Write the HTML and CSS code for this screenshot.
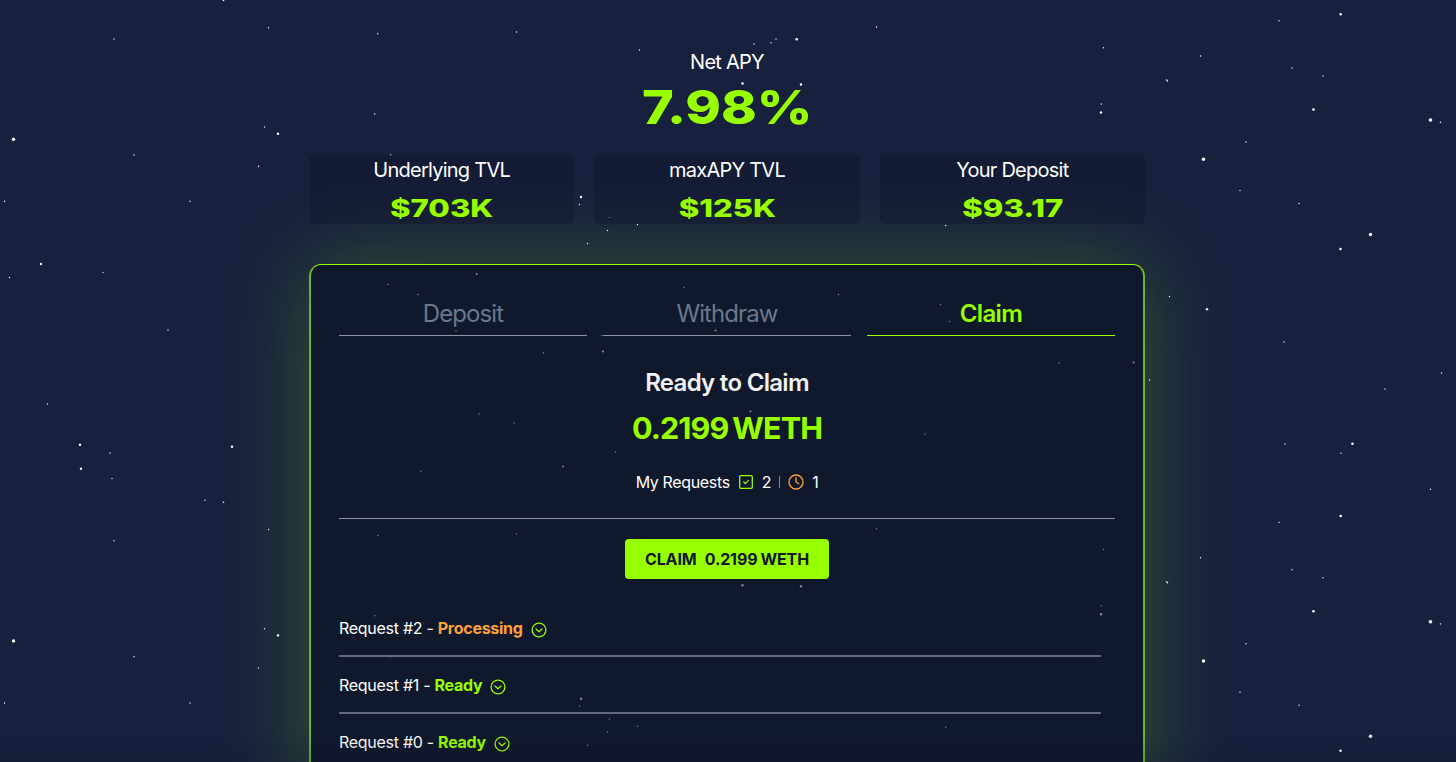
FILE: index.html
```html
<!DOCTYPE html>
<html lang="en">
<head>
    <meta charset="UTF-8">
    <meta name="viewport" content="width=device-width, initial-scale=1.0">
    <title>maxAPY - Claim</title>
    <link rel="stylesheet" href="styles.css">
</head>
<body>
    <svg class="stars" aria-hidden="true">
        <defs>
            <g id="sky"></g>
        </defs>
        <use href="#sky"></use>
        <use href="#sky" y="501.7"></use>
    </svg>

    <main class="page">
        <header class="apy">
            <p class="label">Net APY</p>
            <p class="display big"><span>7.98%</span></p>
        </header>

        <section class="stats">
            <div class="stat">
                <p class="label">Underlying TVL</p>
                <p class="display"><span>$703K</span></p>
            </div>
            <div class="stat">
                <p class="label">maxAPY TVL</p>
                <p class="display"><span>$125K</span></p>
            </div>
            <div class="stat">
                <p class="label">Your Deposit</p>
                <p class="display"><span>$93.17</span></p>
            </div>
        </section>

        <section class="panel">
            <nav class="tabs">
                <a class="tab">Deposit</a>
                <a class="tab">Withdraw</a>
                <a class="tab active">Claim</a>
            </nav>

            <div class="summary">
                <h2>Ready to Claim</h2>
                <p class="amount"><span>0.2199</span><span>WETH</span></p>
                <div class="counts">
                    <span>My Requests</span>
                    <svg class="icon-check" width="16" height="16" viewBox="0 0 16 16">
                        <rect x="1.7" y="1.7" width="12.6" height="12.6" rx="1"/>
                        <path d="M5.8 8l1.6 1.6 2.9-3"/>
                    </svg>
                    <span>2</span>
                    <i class="bar"></i>
                    <svg class="icon-clock" width="16" height="16" viewBox="0 0 16 16">
                        <circle cx="8" cy="8" r="7"/>
                        <path d="M8 3.6V8l2.9 1.7"/>
                    </svg>
                    <span>1</span>
                </div>
            </div>

            <div class="action">
                <button class="claim"><span>CLAIM</span><span>0.2199</span><span>WETH</span></button>
            </div>

            <ul class="requests">
                <li>
                    <span>Request #2 - <b class="processing">Processing</b></span>
                    <svg class="icon-down" width="16" height="16" viewBox="0 0 16 16"><circle cx="8" cy="8" r="6.9"/><path d="M5 7l3 2.7L11 7"/></svg>
                </li>
                <li>
                    <span>Request #1 - <b class="ready">Ready</b></span>
                    <svg class="icon-down" width="16" height="16" viewBox="0 0 16 16"><circle cx="8" cy="8" r="6.9"/><path d="M5 7l3 2.7L11 7"/></svg>
                </li>
                <li>
                    <span>Request #0 - <b class="ready">Ready</b></span>
                    <svg class="icon-down" width="16" height="16" viewBox="0 0 16 16"><circle cx="8" cy="8" r="6.9"/><path d="M5 7l3 2.7L11 7"/></svg>
                </li>
            </ul>
        </section>
    </main>
    <div class="fade"></div>
    <script src="stars.js"></script>
</body>
</html>
```
FILE: styles.css
```css
* {
    box-sizing: border-box;
}
body {
    margin: 0;
    height: 762px;
    overflow: hidden;
    background-color: #17213d;
    color: #fff;
    font-family: Inter, "Open Sans", sans-serif;
}
p, h2, ul {
    margin: 0;
    padding: 0;
}
.stars {
    position: absolute;
    top: 0;
    left: 0;
    width: 100%;
    height: 100%;
    fill: #fff;
}
.page {
    position: relative;
    width: 836px;
    margin-left: 309px;
    padding-top: 50px;
}
.apy {
    height: 105px;
    text-align: center;
}
.label {
    font-size: 20px;
    line-height: 24px;
    letter-spacing: -0.75px;
}
.display {
    margin-top: 13px;
    color: #97ff00;
    font-size: 24.5px;
    font-weight: 800;
    line-height: 24px;
}
.display span {
    display: inline-block;
    transform: scaleX(1.27);
}
.display.big {
    margin-top: 9px;
    font-size: 47px;
    line-height: 48px;
}
.display.big span {
    transform: scaleX(1.15);
}
.stats {
    display: grid;
    grid-template-columns: repeat(3, 1fr);
    gap: 20px;
}
.stat {
    height: 69px;
    padding-top: 3px;
    border-radius: 5px;
    background-color: rgba(18, 23, 45, 0.5);
    text-align: center;
}
.stat .display {
    margin-top: 14px;
}
.panel {
    height: 560px;
    margin-top: 40px;
    padding: 0 28px;
    border: 2px solid #6bb822;
    border-top: 1px solid #97ff00;
    border-radius: 12px;
    background-color: rgba(9, 15, 25, 0.5);
    box-shadow: 0 0 90px rgba(151, 255, 0, 0.24);
}
.tabs {
    display: grid;
    grid-template-columns: repeat(3, 1fr);
    gap: 16px;
    padding-top: 27px;
}
.tab {
    height: 44px;
    border-bottom: 1px solid #8e95a4;
    color: #68788f;
    font-size: 24px;
    line-height: 44px;
    letter-spacing: -0.9px;
    text-align: center;
}
.tab.active {
    border-color: #97ff00;
    color: #97ff00;
    font-weight: 600;
    letter-spacing: -0.6px;
}
.summary {
    height: 183px;
    padding-top: 31px;
    border-bottom: 1px solid #8e95a4;
}
h2 {
    color: #f1f1f1;
    font-size: 24px;
    font-weight: 600;
    line-height: 32px;
    letter-spacing: -0.7px;
    text-align: center;
}
.amount {
    display: flex;
    justify-content: center;
    gap: 4px;
    margin-top: 11px;
    color: #97ff00;
    font-size: 30.5px;
    font-weight: 700;
    line-height: 36px;
    letter-spacing: -0.9px;
}
.counts {
    display: flex;
    justify-content: center;
    align-items: center;
    gap: 8px;
    margin-top: 26px;
    font-size: 16px;
    line-height: 20px;
    letter-spacing: -0.35px;
}
.bar {
    width: 1px;
    height: 12px;
    background-color: #808796;
}
svg {
    flex: none;
    fill: none;
    stroke-width: 1.3;
    stroke-linecap: round;
    stroke-linejoin: round;
}
.icon-check, .icon-down {
    stroke: #97ff00;
}
.icon-clock {
    stroke: #ffa23a;
}
.action {
    display: flex;
    justify-content: center;
    padding-top: 20px;
}
.claim {
    display: flex;
    justify-content: center;
    align-items: center;
    width: 204px;
    height: 40px;
    padding: 0;
    border: none;
    border-radius: 4px;
    background-color: #97ff00;
    color: #10182b;
    font-family: inherit;
    font-size: 16px;
    font-weight: 700;
    letter-spacing: -0.1px;
}
.claim span + span {
    margin-left: 8px;
}
.claim span:last-child {
    margin-left: 3px;
}
.requests {
    width: 762px;
    padding-top: 21px;
    list-style: none;
}
.requests li {
    display: flex;
    align-items: center;
    gap: 8px;
    height: 57px;
    border-bottom: 2px solid #62697b;
    font-size: 16px;
    letter-spacing: -0.28px;
}
.requests svg {
    margin-top: 4px;
}
.processing {
    color: #ffa23a;
}
.ready {
    color: #97ff00;
}
.fade {
    position: absolute;
    right: 0;
    bottom: 0;
    left: 0;
    height: 30px;
    background: linear-gradient(transparent, rgba(10, 14, 35, 0.15));
}
```
FILE: stars.js
```js
// x, y, radius
const stars = [
    [223.5, 0.5, 0.8], [268.5, 27.8, 0.7], [114, 39, 0.7], [377.8, 33.8, 0.7],
    [374.8, 114, 0.7], [264.5, 127, 0.7], [278, 133.7, 1.2], [13.5, 139.2, 1.7],
    [134, 155, 0.7], [258.5, 166.2, 0.7], [390.7, 155, 0.7], [4.5, 201.3, 0.7],
    [190, 201.3, 0.7], [41, 264, 1.2], [9.5, 277.5, 0.7], [103, 272.6, 0.7],
    [168, 330, 0.7], [388, 284.5, 0.7], [418, 294.5, 0.7], [476.7, 274, 1],
    [456, 331, 0.7], [516.5, 32, 0.7], [639.5, 50, 0.7], [754, 44, 0.7],
    [771, 42.7, 0.7], [776, 39, 0.7], [796.7, 39.3, 1.3], [742.5, 83.5, 1.2],
    [801, 84.5, 1.2], [876.5, 27, 0.7], [581, 197, 1.2], [579.5, 204.5, 0.7],
    [609.5, 217.5, 0.6], [637.5, 224.5, 0.7], [607.5, 230.5, 0.7], [587.5, 243.5, 0.7],
    [945.7, 225.5, 0.7], [684, 287.5, 0.7], [838.5, 294.5, 0.7], [940.5, 304.5, 0.7],
    [949.5, 321.5, 0.7], [715.5, 330.5, 1.1], [601.5, 335.5, 0.6], [603, 351.5, 1.1],
    [543.5, 352.7, 0.7], [1103.5, 47.7, 0.7], [1279, 20.7, 0.7], [1340.7, 14.3, 1.3],
    [1200.5, 56, 0.7], [1166.6, 80, 0.7], [1167.4, 81, 0.7], [1292, 68, 0.7],
    [1323, 76, 0.7], [1101.3, 104, 0.7], [1101, 112.5, 1.2], [1313.5, 109.5, 1.3],
    [1430.5, 120, 1.8], [1440.5, 122.2, 0.7], [1246, 142, 0.7], [1203.5, 159.3, 1.7],
    [1240, 190.5, 0.7], [1299, 203.5, 0.7], [1370.5, 234.5, 1.7], [1340.5, 249, 1.3],
    [1169.5, 296.5, 0.7], [1207, 309.3, 1.2], [1284, 342, 0.7], [1133.7, 362.5, 1.1],
    [1059, 363, 0.7], [1149.5, 380, 0.7], [1441.5, 373, 0.7], [47.5, 404, 0.7],
    [80, 444.7, 1.2], [110, 453, 0.7], [81, 468.7, 1.2], [112, 478.5, 0.7],
    [232, 446.7, 1.2], [205, 500.3, 0.7], [479, 414, 0.7], [421, 471.3, 0.7],
    [1385, 389, 0.7], [1285, 444, 0.7], [1352.5, 443.7, 1.3], [1341, 453.3, 0.7],
    [1430.5, 489.3, 0.7], [514, 423, 0.7], [563, 466.5, 1], [750.5, 411.5, 1.1],
    [615.5, 452, 0.7], [733, 419, 0.6], [741, 375, 0.6], [925, 434, 0.7]
];

const sky = document.getElementById("sky");
stars.forEach(([x, y, r]) => {
    const star = document.createElementNS("http://www.w3.org/2000/svg", "circle");
    star.setAttribute("cx", x);
    star.setAttribute("cy", y);
    star.setAttribute("r", r);
    star.setAttribute("fill", "#fff");
    sky.appendChild(star);
});
```
